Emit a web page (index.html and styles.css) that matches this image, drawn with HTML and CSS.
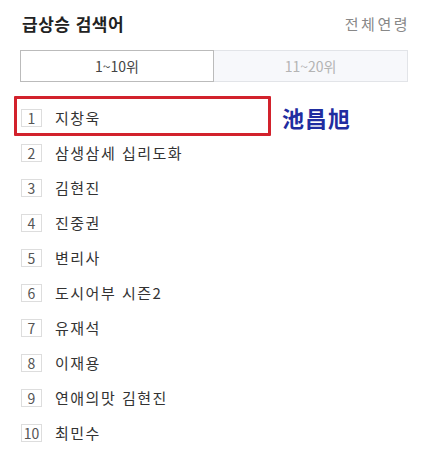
FILE: index.html
```html
<!DOCTYPE html>
<html lang="ko">
<head>
    <meta charset="UTF-8">
    <meta name="viewport" content="width=device-width, initial-scale=1.0">
    <title>급상승 검색어</title>
    <link rel="stylesheet" href="styles.css">
</head>
<body>
    <div class="container">
        <div class="header">
            <h1>급상승 검색어</h1>
            <span class="age">전체연령</span>
        </div>

        <div class="tabs">
            <div class="tab active">1~10위</div>
            <div class="tab">11~20위</div>
        </div>

        <ol class="ranking">
            <li class="first">
                <span class="num">1</span><span class="word">지창욱</span>
                <span class="highlight"></span>
                <span class="note">池昌旭</span>
            </li>
            <li><span class="num">2</span><span class="word">삼생삼세 십리도화</span></li>
            <li><span class="num">3</span><span class="word">김현진</span></li>
            <li><span class="num">4</span><span class="word">진중권</span></li>
            <li><span class="num">5</span><span class="word">변리사</span></li>
            <li><span class="num">6</span><span class="word">도시어부 시즌2</span></li>
            <li><span class="num">7</span><span class="word">유재석</span></li>
            <li><span class="num">8</span><span class="word">이재용</span></li>
            <li><span class="num">9</span><span class="word">연애의맛 김현진</span></li>
            <li><span class="num">10</span><span class="word">최민수</span></li>
        </ol>
    </div>
</body>
</html>
```

FILE: styles.css
```css
body {
    font-family: "Noto Sans CJK KR", "Noto Sans", sans-serif;
    background-color: #fff;
    margin: 0;
    padding: 0;
    color: #333;
}

.container {
    padding: 0 20px;
}

.header {
    display: flex;
    justify-content: space-between;
    align-items: center;
    height: 46px;
    padding-left: 2px;
}

h1 {
    margin: 0;
    font-size: 17px;
    font-weight: bold;
    color: #222;
    letter-spacing: 0.5px;
}

.age {
    font-size: 15px;
    color: #888;
    letter-spacing: 2.5px;
    margin-right: -2px;
}

.tabs {
    display: grid;
    grid-template-columns: 1fr 1fr;
    margin-top: 4px;
    height: 32px;
}

.tab {
    display: flex;
    align-items: center;
    justify-content: center;
    font-size: 14px;
    color: #b4b4b4;
    background-color: #f7f8fb;
    border: 1px solid #e2e4e8;
    border-left: none;
}

.tab.active {
    color: #444;
    background-color: #fff;
    border: 1px solid #bbb;
}

.ranking {
    list-style: none;
    margin: 18px 0 0;
    padding: 0;
}

.ranking li {
    display: flex;
    align-items: center;
    height: 35px;
    position: relative;
}

.num {
    display: inline-flex;
    align-items: center;
    justify-content: center;
    min-width: 17px;
    height: 16px;
    padding: 0 1px;
    border: 1px solid #ddd;
    font-size: 14px;
    color: #555;
    margin-left: 1px;
}

.word {
    margin-left: 13px;
    font-size: 15px;
    letter-spacing: 1.5px;
    color: #333;
}

.highlight {
    position: absolute;
    left: -6px;
    top: -4px;
    width: 251px;
    height: 34px;
    border: 3px solid #d2222c;
    border-radius: 1px;
}

.note {
    position: absolute;
    left: 262px;
    top: 1px;
    font-size: 22px;
    font-weight: bold;
    color: #1f2da0;
    letter-spacing: 1px;
}
```
